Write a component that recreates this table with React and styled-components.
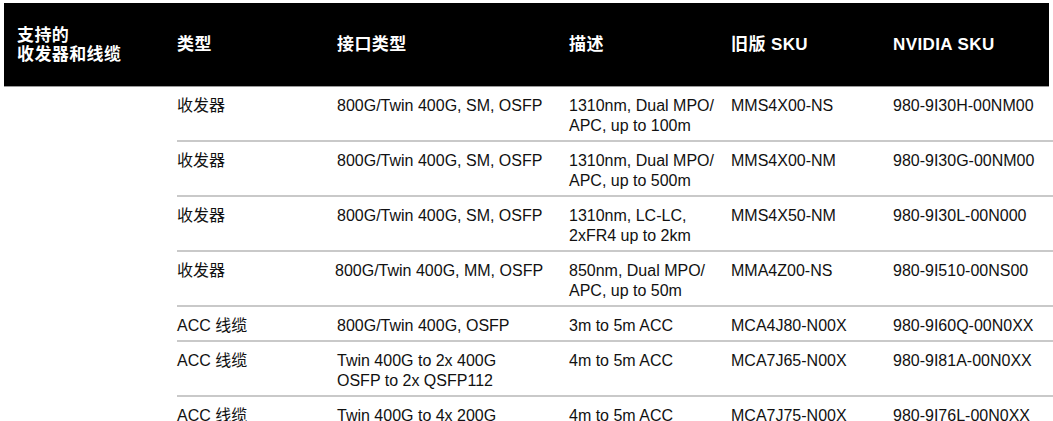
import React from "react";
import styled, { createGlobalStyle } from "styled-components";

const Global = createGlobalStyle`
  html, body { margin: 0; padding: 0; background: #fff; }
  body {
    font-family: "Liberation Sans", "Noto Sans CJK SC", sans-serif;
    color: #111;
  }
`;

const Page = styled.div`
  padding: 3px 0 0 4px;
  width: 1049px;
`;

const cols = "173px 160px 232px 162px 162px 160px";

const Header = styled.div`
  display: grid;
  grid-template-columns: ${cols};
  align-items: center;
  height: 84px;
  width: 1045px;
  background: #000;
  color: #fff;
  border-bottom: 1px solid #9a9a9a;
  box-sizing: border-box;
  font-weight: 700;
  font-size: 17px;
  line-height: 19px;
  letter-spacing: 0.4px;
`;

const HeadCell = styled.div`
  padding-left: ${(p) => (p.$first ? "13px" : "0")};
`;

const Body = styled.div`
  margin-left: 173px;
  width: 876px;
`;

const Row = styled.div`
  display: grid;
  grid-template-columns: 160px 232px 162px 162px 160px;
  border-bottom: 2px solid #c9c9c9;
  &:last-child { border-bottom: none; }
`;

const Cell = styled.div`
  padding: 9px 0 4px;
  font-size: 16px;
  line-height: 20px;
  margin-left: ${(p) => p.$shift || 0}px;
  white-space: pre-line;
`;

const headers = ["支持的\n收发器和线缆", "类型", "接口类型", "描述", "旧版 SKU", "NVIDIA SKU"];

const rows = [
  ["收发器", "800G/Twin 400G, SM, OSFP", "1310nm, Dual MPO/\nAPC, up to 100m", "MMS4X00-NS", "980-9I30H-00NM00"],
  ["收发器", "800G/Twin 400G, SM, OSFP", "1310nm, Dual MPO/\nAPC, up to 500m", "MMS4X00-NM", "980-9I30G-00NM00"],
  ["收发器", "800G/Twin 400G, SM, OSFP", "1310nm, LC-LC,\n2xFR4 up to 2km", "MMS4X50-NM", "980-9I30L-00N000"],
  ["收发器", "800G/Twin 400G, MM, OSFP", "850nm, Dual MPO/\nAPC, up to 50m", "MMA4Z00-NS", "980-9I510-00NS00", -2],
  ["ACC 线缆", "800G/Twin 400G, OSFP", "3m to 5m ACC", "MCA4J80-N00X", "980-9I60Q-00N0XX"],
  ["ACC 线缆", "Twin 400G to 2x 400G\nOSFP to 2x QSFP112", "4m to 5m ACC", "MCA7J65-N00X", "980-9I81A-00N0XX"],
  ["ACC 线缆", "Twin 400G to 4x 200G", "4m to 5m ACC", "MCA7J75-N00X", "980-9I76L-00N0XX"],
];

export default function App() {
  return (
    <Page>
      <Global />
      <Header>
        {headers.map((h, i) => (
          <HeadCell key={i} $first={i === 0}>
            {h.split("\n").map((l, j) => (
              <div key={j}>{l}</div>
            ))}
          </HeadCell>
        ))}
      </Header>
      <Body>
        {rows.map((r, i) => (
          <Row key={i}>
            <Cell>{r[0]}</Cell>
            <Cell $shift={r[5]}>{r[1]}</Cell>
            <Cell>{r[2]}</Cell>
            <Cell>{r[3]}</Cell>
            <Cell>{r[4]}</Cell>
          </Row>
        ))}
      </Body>
    </Page>
  );
}
